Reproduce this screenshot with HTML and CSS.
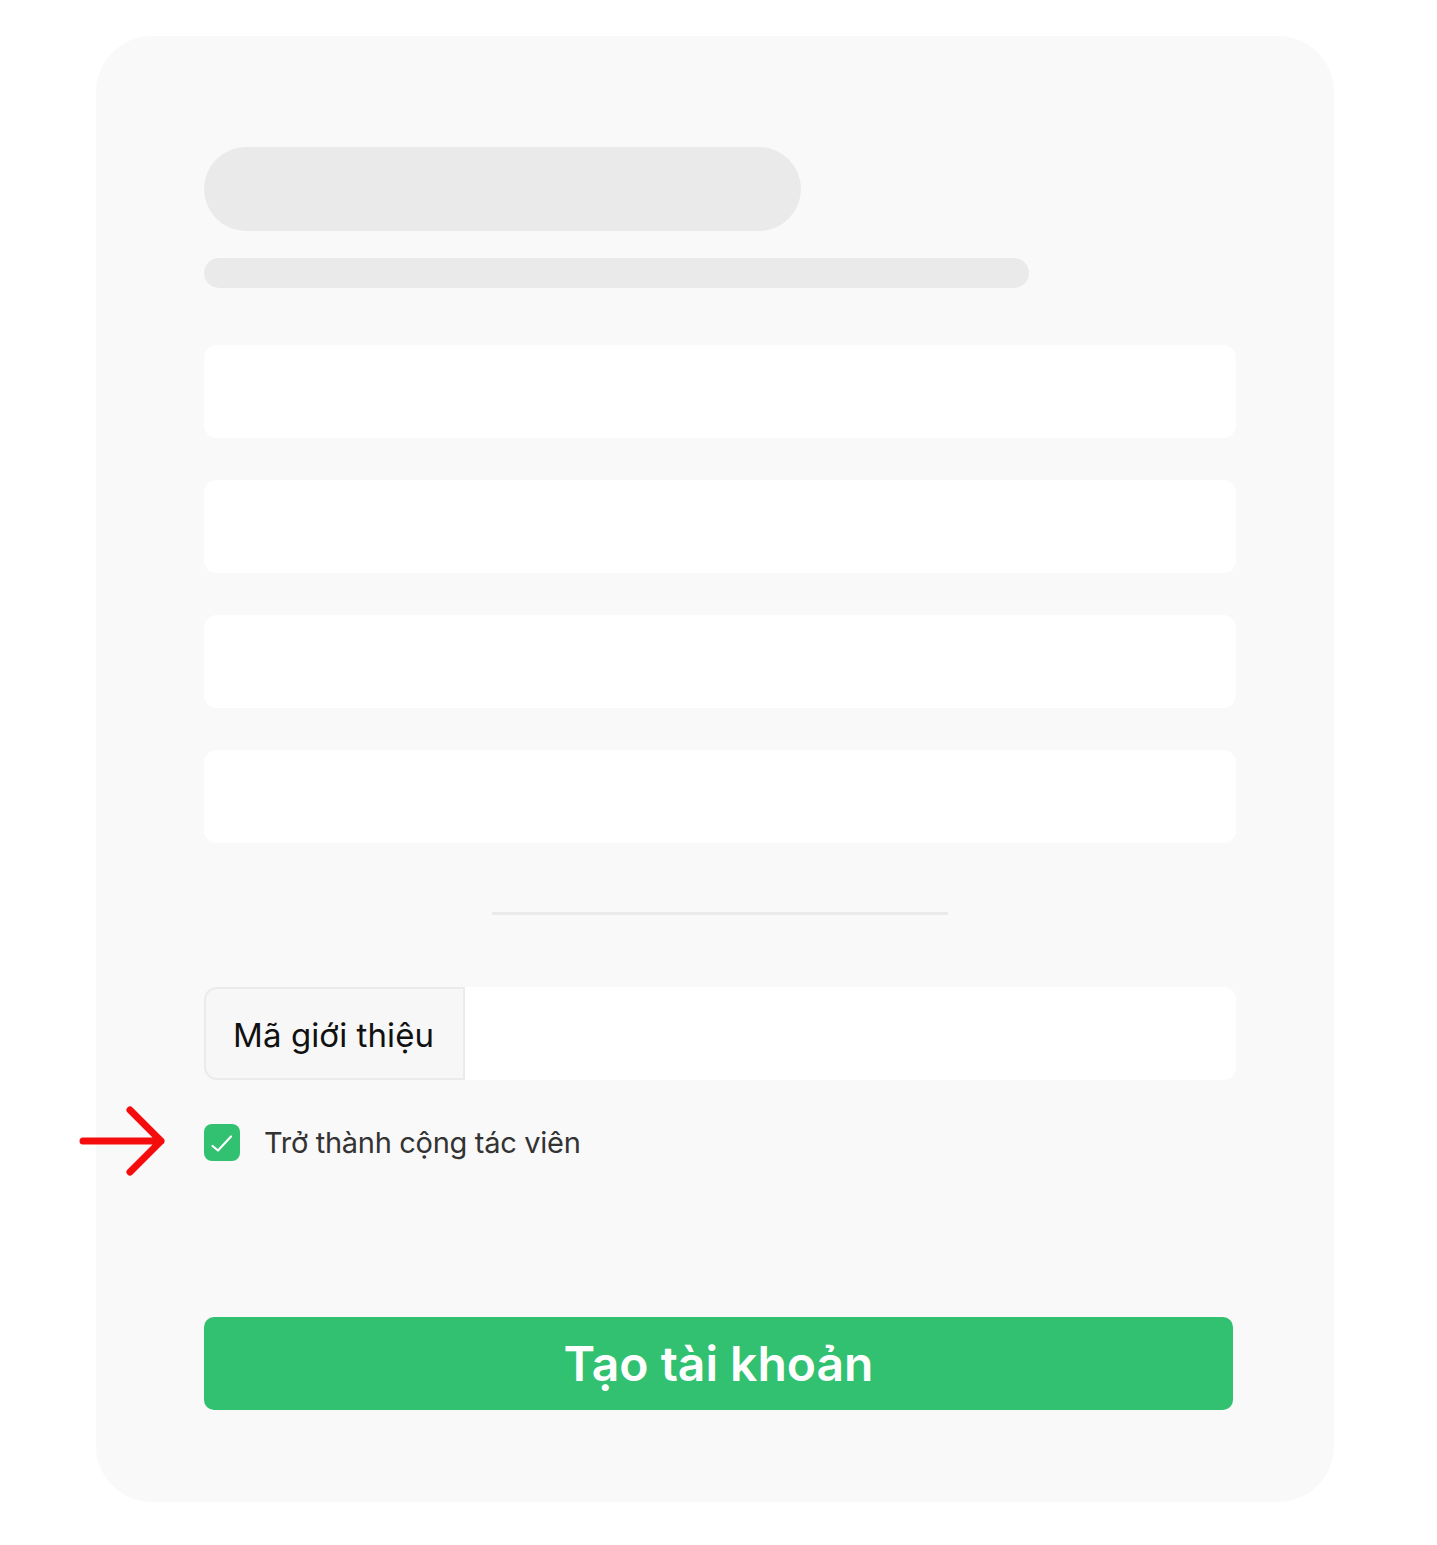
FILE: index.html
```html
<!DOCTYPE html>
<html lang="vi">
<head>
    <meta charset="UTF-8">
    <meta name="viewport" content="width=device-width, initial-scale=1.0">
    <title>Tạo tài khoản</title>
    <link rel="stylesheet" href="styles.css">
</head>
<body>
    <div class="card">
        <div class="skeleton-title"></div>
        <div class="skeleton-subtitle"></div>

        <div class="fields">
            <input class="field" type="text">
            <input class="field" type="text">
            <input class="field" type="password">
            <input class="field" type="password">
        </div>

        <div class="divider"></div>

        <div class="referral">
            <span class="referral-label">Mã giới thiệu</span>
            <input class="referral-input" type="text">
        </div>

        <label class="partner">
            <span class="arrow">
                <svg width="90" height="72" viewBox="0 0 90 72">
                    <path d="M6 36 H84 M53 5 L84 36 L53 67" fill="none" stroke="#f50c0c" stroke-width="7" stroke-linecap="round" stroke-linejoin="round"/>
                </svg>
            </span>
            <span class="checkbox">
                <svg width="36" height="37" viewBox="0 0 36 37">
                    <path d="M8.5 22 L14 26.5 L27 12.5" fill="none" stroke="#fff" stroke-width="2.2" stroke-linecap="round" stroke-linejoin="round"/>
                </svg>
            </span>
            <span class="partner-text">Trở thành cộng tác viên</span>
        </label>

        <button class="submit">Tạo tài khoản</button>
    </div>
</body>
</html>
```

FILE: styles.css
```css
body {
    margin: 0;
    padding: 36px 0 43px 96px;
    background-color: #ffffff;
    font-family: Inter, "Noto Sans", Arial, sans-serif;
}
.card {
    width: 1238px;
    height: 1466px;
    box-sizing: border-box;
    padding: 111px 98px 0 108px;
    background-color: #f9f9f9;
    border-radius: 56px;
}
.skeleton-title {
    width: 597px;
    height: 84px;
    background-color: #eaeaea;
    border-radius: 42px;
}
.skeleton-subtitle {
    width: 825px;
    height: 30px;
    margin-top: 27px;
    background-color: #eaeaea;
    border-radius: 15px;
}
.fields {
    display: flex;
    flex-direction: column;
    gap: 42px;
    margin-top: 57px;
}
.field {
    display: block;
    width: 100%;
    height: 93px;
    box-sizing: border-box;
    border: none;
    border-radius: 13px;
    background-color: #ffffff;
}
.divider {
    width: 456px;
    height: 3px;
    margin: 69px auto 0;
    background-color: #eaeaea;
}
.referral {
    display: flex;
    height: 93px;
    margin-top: 72px;
}
.referral-label {
    display: flex;
    align-items: center;
    box-sizing: border-box;
    width: 261px;
    padding-left: 27px;
    padding-top: 3px;
    background-color: #f7f7f8;
    border: 2px solid #ebebeb;
    border-radius: 13px 0 0 13px;
    font-size: 33px;
    letter-spacing: 0.1px;
    color: #111111;
}
.referral-input {
    flex: 1;
    border: none;
    border-radius: 0 13px 13px 0;
    background-color: #ffffff;
}
.partner {
    position: relative;
    display: flex;
    align-items: center;
    gap: 24px;
    margin-top: 44px;
}
.arrow {
    position: absolute;
    left: -127px;
    top: -19px;
    display: flex;
}
.checkbox {
    display: flex;
    width: 36px;
    height: 37px;
    background-color: #32c170;
    border-radius: 8px;
}
.partner-text {
    font-size: 29px;
    letter-spacing: -0.3px;
    color: #333333;
}
.submit {
    display: block;
    width: 1029px;
    height: 93px;
    margin-top: 156px;
    border: none;
    border-radius: 10px;
    background-color: #32c170;
    color: #ffffff;
    font-family: Inter, "Noto Sans", Arial, sans-serif;
    font-size: 48px;
    font-weight: 600;
    cursor: pointer;
}
```
